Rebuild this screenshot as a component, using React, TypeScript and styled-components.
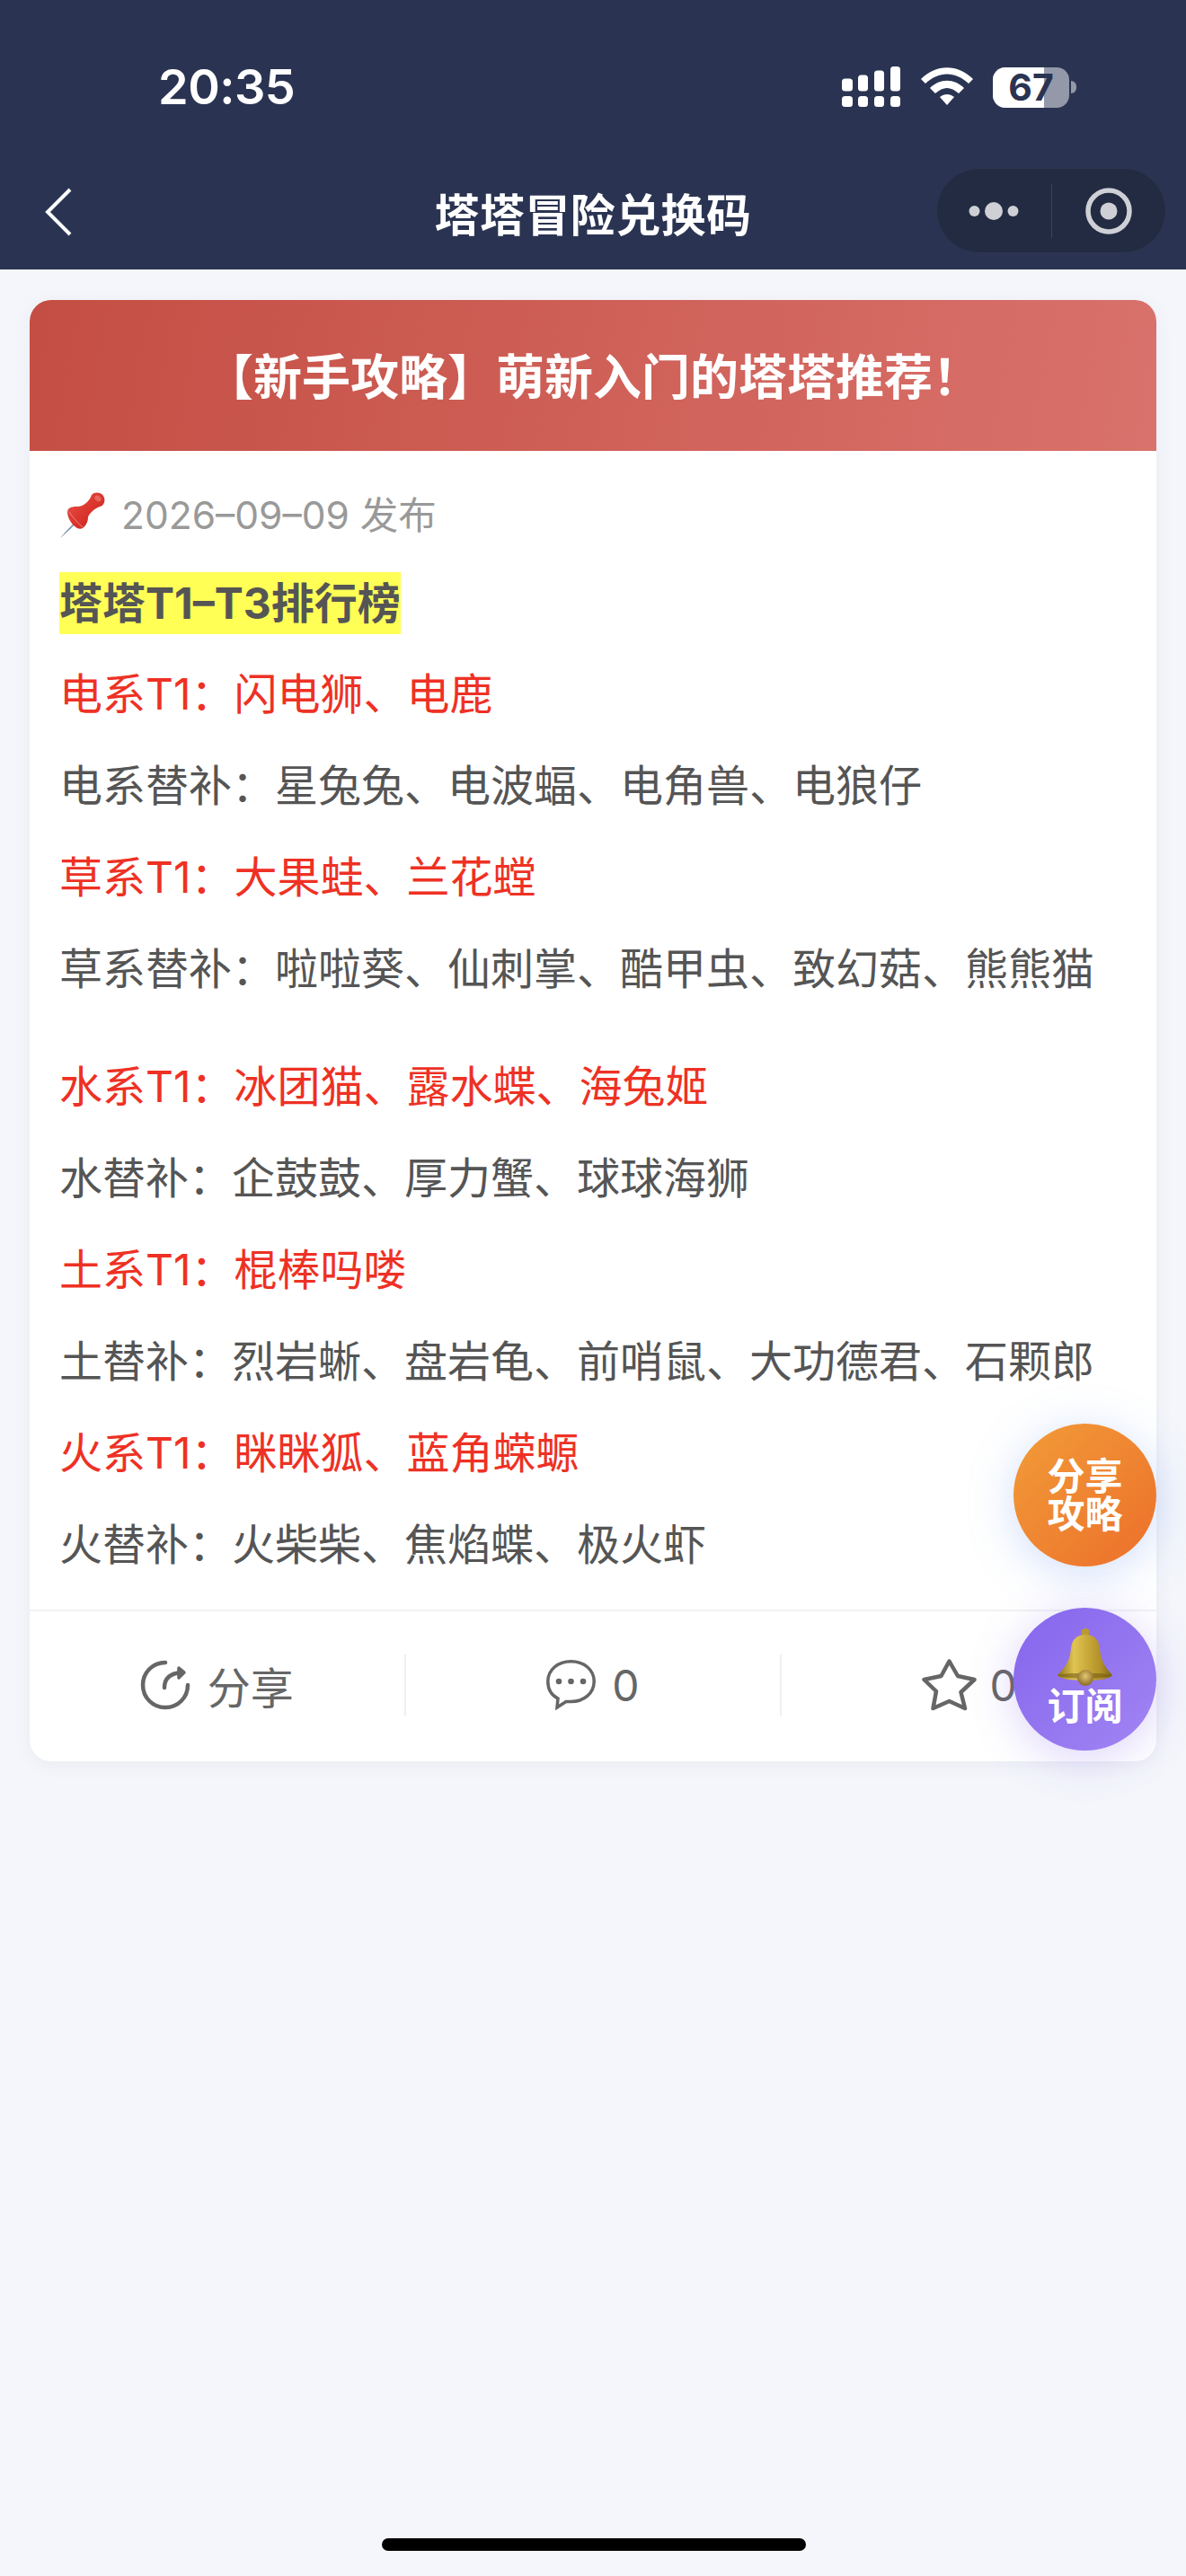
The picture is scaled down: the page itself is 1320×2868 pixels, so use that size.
import React from "react";
import styled, { createGlobalStyle } from "styled-components";

const GlobalStyle = createGlobalStyle`
  html, body {
    margin: 0;
    padding: 0;
    background: #f4f6fb;
    font-family: "Inter", "Noto Sans CJK SC", sans-serif;
  }
`;

const Page = styled.div`
  position: relative;
  width: 1320px;
  height: 2868px;
  overflow: hidden;
  background: #f4f6fb;
`;

const Header = styled.header`
  height: 300px;
  background: #2a3452;
  color: #fff;
  display: flex;
  flex-direction: column;
`;

const StatusBar = styled.div`
  height: 176px;
  box-sizing: border-box;
  padding: 68px 122px 0 176px;
  display: flex;
  justify-content: space-between;
  align-items: flex-start;
`;

const Clock = styled.span`
  font-size: 54px;
  line-height: 58px;
  font-weight: 600;
  letter-spacing: -0.5px;
`;

const StatusIcons = styled.div`
  display: flex;
  align-items: center;
  gap: 22px;
  margin-top: 6px;
`;

const Battery = styled.div`
  position: relative;
  width: 85px;
  height: 45px;
  border-radius: 14px;
  overflow: hidden;
  background: #9499a9;
  color: #2a3452;
  font-size: 41px;
  line-height: 45px;
  font-weight: 700;
  text-align: center;
  &::before {
    content: "";
    position: absolute;
    inset: 0 28px 0 0;
    background: #fff;
  }
`;

const BatteryText = styled.span`
  position: relative;
`;

const BatteryWrap = styled.div`
  display: flex;
  align-items: center;
  gap: 2px;
`;

const BatteryCap = styled.div`
  width: 6px;
  height: 14px;
  border-radius: 0 6px 6px 0;
  background: #9499a9;
`;

const NavBar = styled.div`
  position: relative;
  flex: 1;
  display: flex;
  align-items: center;
  justify-content: space-between;
  padding: 0 22px 0 46px;
  margin-top: -4px;
`;

const NavTitle = styled.h1`
  position: absolute;
  left: 0;
  right: 0;
  margin: 0;
  text-align: center;
  font-size: 50px;
  font-weight: 700;
  letter-spacing: 0.4px;
`;

const Capsule = styled.div`
  width: 256px;
  height: 95px;
  margin-top: -3px;
  box-sizing: border-box;
  border: 1px solid #2c3650;
  border-radius: 48px;
  background: #222b41;
  display: flex;
  align-items: center;
`;

const CapsuleSide = styled.div`
  flex: 1;
  height: 100%;
  display: flex;
  align-items: center;
  justify-content: center;
`;

const CapsuleLine = styled.div`
  width: 1px;
  height: 60px;
  background: #3a4359;
`;

const Content = styled.main`
  padding: 34px 33px 0;
`;

const Card = styled.article`
  background: #fff;
  border-radius: 24px;
  overflow: hidden;
  box-shadow: 0 4px 20px rgba(60, 70, 110, 0.06);
`;

const CardHead = styled.div`
  height: 168px;
  box-sizing: border-box;
  padding-bottom: 4px;
  background: linear-gradient(100deg, #c44e43, #d9726c);
  color: #fff;
  font-size: 54px;
  font-weight: 700;
  display: flex;
  align-items: center;
  justify-content: center;
`;

const CardBody = styled.div`
  padding: 38px 33px 0;
`;

const DateRow = styled.div`
  display: flex;
  align-items: center;
  gap: 15px;
  height: 60px;
  font-size: 42.5px;
  color: #999;
`;

const PinSvg = styled.svg`
  margin-top: 8px;
`;

const Highlight = styled.div`
  margin-top: 37px;
  width: fit-content;
  background: #ffff55;
  color: #555;
  font-size: 48px;
  font-weight: 700;
  line-height: 69px;
`;

const Line = styled.p<{ $red?: boolean; $gap: number }>`
  margin: ${(p) => p.$gap}px 0 0;
  height: 68px;
  line-height: 68px;
  font-size: 48px;
  white-space: nowrap;
  color: ${(p) => (p.$red ? "#ee3124" : "#555")};
`;

const CardFoot = styled.div`
  margin-top: 38px;
  height: 167px;
  box-sizing: content-box;
  border-top: 2px solid #f2f2f4;
  display: flex;
  align-items: center;
  padding-bottom: 0;
`;

const FootItem = styled.div<{ $last?: boolean; $gap: number }>`
  flex: 1;
  height: 68px;
  margin-top: -3px;
  display: flex;
  align-items: center;
  justify-content: center;
  gap: ${(p) => p.$gap}px;
  font-size: 48px;
  color: #666;
  border-right: ${(p) => (p.$last ? "none" : "2px solid #f0f0f2")};
`;

const FloatButton = styled.div<{ $top: number; $bg: string; $glow: string; $lift?: number }>`
  position: absolute;
  left: 1128px;
  top: ${(p) => p.$top}px;
  width: 159px;
  height: 159px;
  box-sizing: border-box;
  padding-bottom: ${(p) => p.$lift || 0}px;
  border-radius: 50%;
  background: ${(p) => p.$bg};
  box-shadow: 0 8px 50px ${(p) => p.$glow};
  color: #fff;
  font-size: 42px;
  line-height: 42px;
  font-weight: 600;
  text-align: center;
  display: flex;
  flex-direction: column;
  align-items: center;
  justify-content: center;
`;

const HomeBar = styled.div`
  position: absolute;
  left: 425px;
  top: 2826px;
  width: 472px;
  height: 14px;
  border-radius: 7px;
  background: #000;
`;

const lines: { text: string; red?: boolean; gap: number }[] = [
  { text: "电系T1：闪电狮、电鹿", red: true, gap: 33 },
  { text: "电系替补：星兔兔、电波蝠、电角兽、电狼仔", gap: 34 },
  { text: "草系T1：大果蛙、兰花螳", red: true, gap: 34 },
  { text: "草系替补：啦啦葵、仙刺掌、酷甲虫、致幻菇、熊熊猫", gap: 34 },
  { text: "水系T1：冰团猫、露水蝶、海兔姬", red: true, gap: 63 },
  { text: "水替补：企鼓鼓、厚力蟹、球球海狮", gap: 34 },
  { text: "土系T1：棍棒吗喽", red: true, gap: 34 },
  { text: "土替补：烈岩蜥、盘岩龟、前哨鼠、大功德君、石颗郎", gap: 34 },
  { text: "火系T1：眯眯狐、蓝角蝾螈", red: true, gap: 34 },
  { text: "火替补：火柴柴、焦焰蝶、极火虾", gap: 34 },
];

const SignalIcon = () => (
  <svg width="66" height="46" viewBox="0 0 66 46" fill="#fff">
    <rect x="0" y="13.500" width="12" height="14" rx="3.500" />
    <rect x="18" y="9.500" width="11" height="18" rx="3.500" />
    <rect x="36" y="4.500" width="11" height="23" rx="3.500" />
    <rect x="54" y="0" width="11" height="27.500" rx="3.500" />
    <rect x="0" y="33" width="12" height="12" rx="3.500" />
    <rect x="18" y="33" width="11" height="12" rx="3.500" />
    <rect x="36" y="33" width="11" height="12" rx="3.500" />
    <rect x="54" y="33" width="11" height="12" rx="3.500" />
  </svg>
);

const WifiIcon = () => (
  <svg width="58" height="44" viewBox="0 0 58 44" fill="#fff">
    <path d="M0 13 C17 -4 41 -4 58 13 L53 18 C38 4 20 4 5 18 Z" />
    <path d="M10 23 C21 12 37 12 48 23 L42 29 C33 21 25 21 16 29 Z" />
    <path d="M21 33 C26 29 32 29 37 33 L29 42 Z" />
  </svg>
);

const BackIcon = () => (
  <svg width="34" height="56" viewBox="0 0 34 56" fill="none" stroke="#fff" strokeWidth="4">
    <path d="M32 3 L7 28 L32 53" />
  </svg>
);

const MoreIcon = () => (
  <svg width="56" height="22" viewBox="0 0 56 22" fill="#cfd0d6">
    <circle cx="6.500" cy="11" r="6" />
    <circle cx="28" cy="11" r="10" />
    <circle cx="49.500" cy="11" r="6" />
  </svg>
);

const RecordIcon = () => (
  <svg width="52" height="52" viewBox="0 0 52 52">
    <circle cx="26" cy="26" r="23" fill="none" stroke="#cfd0d6" strokeWidth="5.500" />
    <circle cx="26" cy="26" r="9.500" fill="#cfd0d6" />
  </svg>
);

const PinIcon = () => (
  <PinSvg width="54" height="54" viewBox="8 8 54 54">
    <defs>
      <linearGradient id="pinHead" x1="0" y1="0" x2="1" y2="1">
        <stop offset="0" stopColor="#e8524a" />
        <stop offset="0.55" stopColor="#d9342b" />
        <stop offset="1" stopColor="#b3221c" />
      </linearGradient>
      <linearGradient id="pinNeedle" x1="1" y1="0" x2="0" y2="1">
        <stop offset="0" stopColor="#c3d0e0" />
        <stop offset="0.6" stopColor="#5a7fa8" />
        <stop offset="1" stopColor="#39404a" />
      </linearGradient>
    </defs>
    <path d="M27 40 L29 42 L9 60 Z" fill="url(#pinNeedle)" />
    <path
      d="M44 12 C47 8 55 9 57 13 C60 18 58 24 53 25 C50 26 47 28 45 30 C42 33 40 35 40 37 C40 41 38 46 34 49 C31 51 27 49 24 46 C20 42 17 36 17 31 C17 27 21 25 27 25 C32 25 36 23 39 20 C41 18 43 15 44 12 Z"
      fill="url(#pinHead)"
    />
    <path d="M18 30 C21 34 27 42 34 48" stroke="#f08a80" strokeWidth="1.200" fill="none" opacity="0.7" />
    <ellipse cx="51" cy="16" rx="4" ry="3" fill="#f0837a" opacity="0.6" transform="rotate(35 51 16)" />
  </PinSvg>
);

const ShareIcon = () => (
  <svg width="56" height="56" viewBox="0 0 56 56" fill="none" stroke="#666" strokeLinecap="round" strokeLinejoin="round">
    <path d="M28 3 C14 3 3 14 3 28 C3 42 14 53 28 53 C42 53 53 42 53 28" strokeWidth="4.500" />
    <path d="M27 31 C27 22 32 15 46 14" strokeWidth="4.500" />
    <path d="M43 9 L49 14 L43 20 Z" strokeWidth="3.500" fill="#666" />
  </svg>
);

const CommentIcon = () => (
  <svg width="55" height="56" viewBox="0 0 55 56" fill="none" stroke="#666" strokeWidth="3.500">
    <path d="M13 43 C5 39 1.800 32 1.800 24 C1.800 11 13 1.800 27.500 1.800 C42 1.800 53.200 11 53.200 24 C53.200 37 42 46.500 27.500 46.500 C25 46.500 23 46.500 22 46.500 L12 53 Z" />
    <circle cx="14" cy="24" r="3.300" fill="#666" stroke="none" />
    <circle cx="27.500" cy="24" r="3.300" fill="#666" stroke="none" />
    <circle cx="41" cy="24" r="3.300" fill="#666" stroke="none" />
  </svg>
);

const StarIcon = () => (
  <svg width="61" height="58" viewBox="0 0 61 58" fill="none" stroke="#666" strokeWidth="4.500" strokeLinejoin="round">
    <path d="M30.500 2.500 L40 19 L58.500 23 L43.500 37 L48 55 L30.500 47 L12.500 55 L16 36 L2.500 23 L21.500 19 Z" />
  </svg>
);

const BellIcon = () => (
  <svg width="68" height="66" viewBox="8 8 68 66">
    <defs>
      <linearGradient id="bellBody" x1="0" y1="0" x2="1" y2="0">
        <stop offset="0" stopColor="#8d7218" />
        <stop offset="0.3" stopColor="#e0c453" />
        <stop offset="0.55" stopColor="#c9a93a" />
        <stop offset="0.8" stopColor="#b08f27" />
        <stop offset="1" stopColor="#7d6415" />
      </linearGradient>
      <radialGradient id="bellClapper" cx="0.5" cy="0.4" r="0.6">
        <stop offset="0" stopColor="#e3c672" />
        <stop offset="1" stopColor="#8a6a22" />
      </radialGradient>
    </defs>
    <circle cx="42" cy="12.500" r="4.500" fill="#bb9b30" />
    <path
      d="M42 15 C32 15 27 21 26 30 C25 43 21 50 11 60 C14 65 30 66 42 66 C54 66 69 65 72 60 C63 50 59 43 58 30 C57 21 52 15 42 15 Z"
      fill="url(#bellBody)"
    />
    <path d="M12 60 C20 65 64 65 71 60 C64 57 20 57 12 60 Z" fill="#6f5712" opacity="0.55" />
    <circle cx="42" cy="63" r="9" fill="url(#bellClapper)" />
  </svg>
);

const App = () => {
  return (
    <Page>
      <GlobalStyle />
      <Header>
        <StatusBar>
          <Clock>20:35</Clock>
          <StatusIcons>
            <SignalIcon />
            <WifiIcon />
            <BatteryWrap>
              <Battery>
                <BatteryText>67</BatteryText>
              </Battery>
              <BatteryCap />
            </BatteryWrap>
          </StatusIcons>
        </StatusBar>
        <NavBar>
          <BackIcon />
          <NavTitle>塔塔冒险兑换码</NavTitle>
          <Capsule>
            <CapsuleSide>
              <MoreIcon />
            </CapsuleSide>
            <CapsuleLine />
            <CapsuleSide>
              <RecordIcon />
            </CapsuleSide>
          </Capsule>
        </NavBar>
      </Header>
      <Content>
        <Card>
          <CardHead>【新手攻略】萌新入门的塔塔推荐！</CardHead>
          <CardBody>
            <DateRow>
              <PinIcon />
              2026–09–09 发布
            </DateRow>
            <Highlight>塔塔T1–T3排行榜</Highlight>
            {lines.map((line) => (
              <Line key={line.text} $red={line.red} $gap={line.gap}>
                {line.text}
              </Line>
            ))}
          </CardBody>
          <CardFoot>
            <FootItem $gap={19}>
              <ShareIcon />
              分享
            </FootItem>
            <FootItem $gap={18}>
              <CommentIcon />0
            </FootItem>
            <FootItem $last $gap={15}>
              <StarIcon />0
            </FootItem>
          </CardFoot>
        </Card>
      </Content>
      <FloatButton $top={1585} $bg="linear-gradient(135deg, #f29c38, #ec6f2b)" $glow="rgba(120, 160, 240, 0.35)">
        分享
        <br />
        攻略
      </FloatButton>
      <FloatButton $top={1790} $lift={6} $bg="linear-gradient(135deg, #8565ec, #a285f4)" $glow="rgba(140, 110, 240, 0.3)">
        <BellIcon />
        订阅
      </FloatButton>
      <HomeBar />
    </Page>
  );
};

export default App;
